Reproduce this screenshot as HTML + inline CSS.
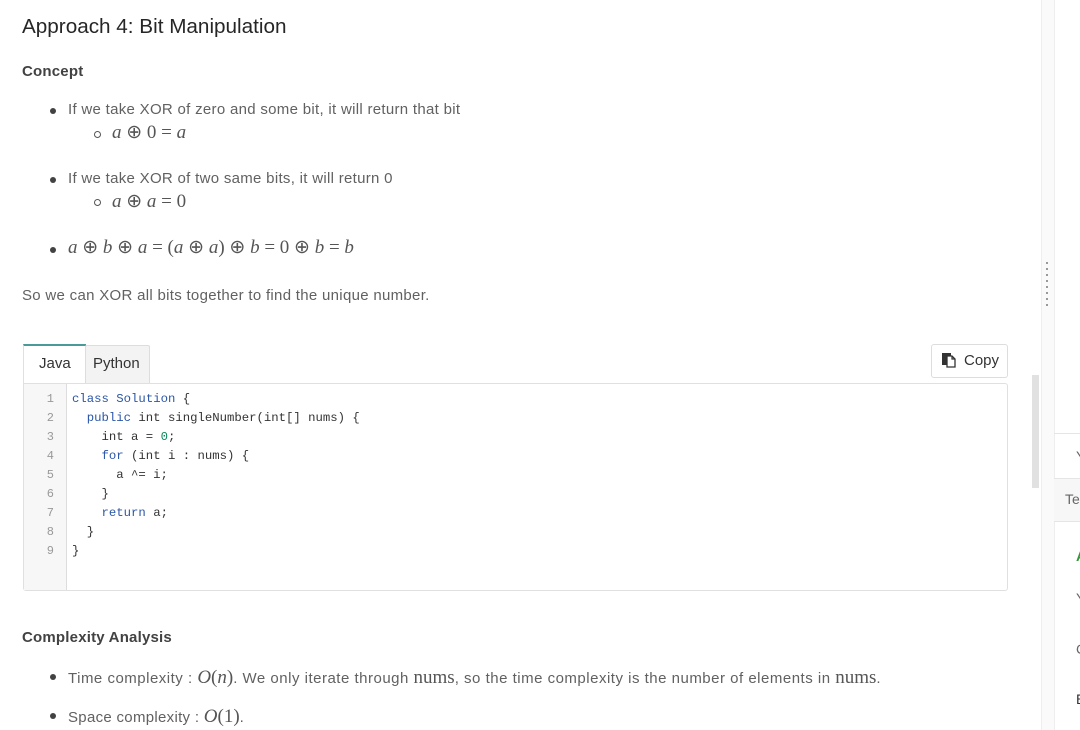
<!DOCTYPE html>
<html><head><meta charset="utf-8"><style>
body{margin:0;width:1080px;height:730px;overflow:hidden;background:#fff;font-family:"Liberation Sans",sans-serif;color:#616161;position:relative}
.a{position:absolute;white-space:nowrap}
.t{font-size:15px;letter-spacing:0.3px}
.m{font-family:"Liberation Serif",serif;font-size:19px;color:#555;letter-spacing:0}
.m i{font-style:italic}
.dot{position:absolute;width:6px;height:6px;border-radius:50%;background:#424242}
.circ{position:absolute;width:5px;height:5px;border-radius:50%;border:1px solid #555}
.code{font-family:"Liberation Mono",monospace;font-size:12.3px;color:#333}
.k{color:#2b56a8}
.n{color:#09885a}
.ln{font-family:"Liberation Mono",monospace;font-size:12px;color:#999;text-align:right;width:30px}
</style></head><body>
<div class="a" style="left:22px;top:15px;font-size:20.7px;color:#262626">Approach 4: Bit Manipulation</div>
<div class="a" style="left:22px;top:63px;font-size:15px;font-weight:bold;color:#424242;letter-spacing:0.2px">Concept</div>

<div class="dot" style="left:50px;top:108px"></div>
<div class="a t" style="left:68px;top:101px">If we take XOR of zero and some bit, it will return that bit</div>
<div class="circ" style="left:94px;top:131px"></div>
<div class="a m" style="left:112px;top:121px"><i>a</i> ⊕ 0 = <i>a</i></div>

<div class="dot" style="left:50px;top:177px"></div>
<div class="a t" style="left:68px;top:170px">If we take XOR of two same bits, it will return 0</div>
<div class="circ" style="left:94px;top:199px"></div>
<div class="a m" style="left:112px;top:190px"><i>a</i> ⊕ <i>a</i> = 0</div>

<div class="dot" style="left:50px;top:247px"></div>
<div class="a m" style="left:68px;top:236px"><i>a</i> ⊕ <i>b</i> ⊕ <i>a</i> = (<i>a</i> ⊕ <i>a</i>) ⊕ <i>b</i> = 0 ⊕ <i>b</i> = <i>b</i></div>

<div class="a t" style="left:22px;top:287px">So we can XOR all bits together to find the unique number.</div>

<div class="a" style="left:23px;top:344px;width:62px;height:39px;border-top:2px solid #4a9a9a;border-left:1px solid #e0e0e0;background:#fff"></div>
<div class="a" style="left:39px;top:355px;font-size:15px;color:#333">Java</div>
<div class="a" style="left:85px;top:345px;width:63px;height:38px;background:#f3f3f3;border:1px solid #ddd;border-bottom:none;border-radius:2px 2px 0 0"></div>
<div class="a" style="left:93px;top:355px;font-size:15px;color:#333">Python</div>
<div class="a" style="left:931px;top:344px;width:75px;height:32px;border:1px solid #ddd;border-radius:3px"></div>
<svg class="a" style="left:941px;top:352px" width="16" height="16" viewBox="0 0 16 16"><rect x="1" y="1" width="9" height="12" fill="#333"/><path d="M6 4h5l3 3v8H6z" fill="#fff" stroke="#333" stroke-width="1.3"/><path d="M11 4v3h3" fill="none" stroke="#333" stroke-width="1.2"/></svg>
<div class="a" style="left:964px;top:352px;font-size:15px;color:#333">Copy</div>

<div class="a" style="left:23px;top:383px;width:983px;height:206px;border:1px solid #e0e0e0;border-radius:0 3px 3px 3px"></div>
<div class="a" style="left:24px;top:384px;width:42px;height:206px;background:#f7f7f7;border-right:1px solid #ddd"></div>
<div class="a ln" style="left:24px;top:390px;line-height:19px;white-space:pre">1
2
3
4
5
6
7
8
9</div>
<div class="a code" style="left:72px;top:390px;line-height:19px;white-space:pre"><span class="k">class</span> <span class="k">Solution</span> {
  <span class="k">public</span> int singleNumber(int[] nums) {
    int a = <span class="n">0</span>;
    <span class="k">for</span> (int i : nums) {
      a ^= i;
    }
    <span class="k">return</span> a;
  }
}</div>

<div class="a" style="left:1032px;top:375px;width:7px;height:113px;background:#e1e1e1"></div>

<div class="a" style="left:22px;top:629px;font-size:15px;font-weight:bold;color:#424242;letter-spacing:0.2px">Complexity Analysis</div>
<div class="dot" style="left:50px;top:674px"></div>
<div class="a t" style="left:68px;top:667px;letter-spacing:0.5px">Time complexity : <span class="m"><i>O</i>(<i>n</i>)</span>. We only iterate through <span class="m">nums</span>, so the time complexity is the number of elements in <span class="m">nums</span>.</div>
<div class="dot" style="left:50px;top:713px"></div>
<div class="a t" style="left:68px;top:706px">Space complexity : <span class="m"><i>O</i>(1)</span>.</div>

<div class="a" style="left:1041px;top:0;width:12px;height:730px;background:#fafafa;border-left:1px solid #eee;border-right:1px solid #eee"></div>
<div class="a" style="left:1046px;top:262px;width:2px;height:46px;background:repeating-linear-gradient(#999 0 2px,transparent 2px 6px)"></div>
<div class="a" style="left:1054px;top:433px;width:26px;height:1px;background:#e5e5e5"></div>
<div class="a" style="left:1076px;top:448px;font-size:14px;color:#666">Y</div>
<div class="a" style="left:1054px;top:478px;width:26px;height:42px;background:#f7f7f7;border-top:1px solid #e5e5e5;border-bottom:1px solid #e5e5e5"></div>
<div class="a" style="left:1065px;top:491px;font-size:14px;color:#666">Te</div>
<div class="a" style="left:1076px;top:548px;font-size:14px;color:#2d9a3a;font-weight:bold">A</div>
<div class="a" style="left:1076px;top:590px;font-size:14px;color:#666">Y</div>
<div class="a" style="left:1076px;top:641px;font-size:14px;color:#666">C</div>
<div class="a" style="left:1076px;top:691px;font-size:14px;color:#333">E</div>
</body></html>
